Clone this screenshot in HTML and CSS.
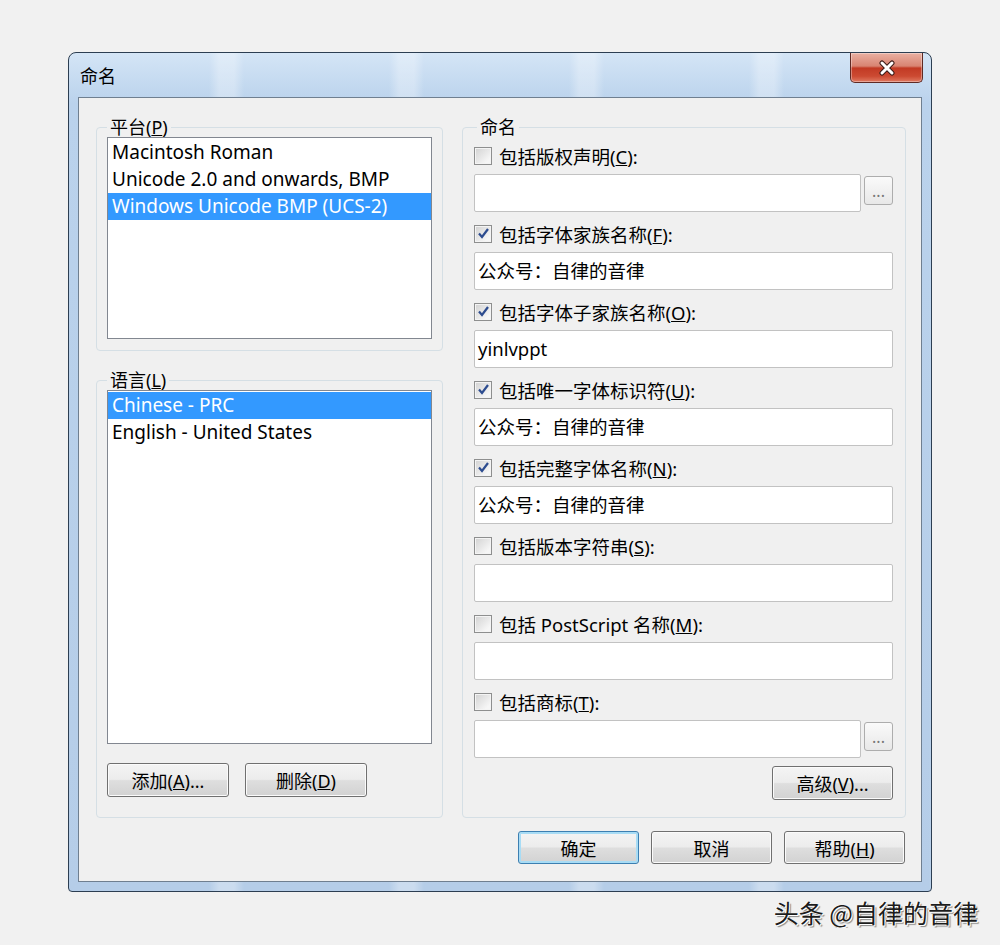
FILE: index.html
```html
<!DOCTYPE html>
<html lang="zh-CN">
  <head>
    <meta charset="UTF-8" />
    <title>命名</title>
    <link rel="stylesheet" href="styles.css">
  </head>
  <body>
    <div class="page">
      <div class="window">
        <div class="titlebar">
          <span class="title">命名</span>
          <div class="close">
            <svg width="18" height="16" viewBox="0 0 18 16">
              <path d="M4 3 L14 13 M14 3 L4 13" stroke="#3a1a16" stroke-width="5" stroke-linecap="round" fill="none" />
              <path d="M4 3 L14 13 M14 3 L4 13" stroke="#ffffff" stroke-width="3" stroke-linecap="round" fill="none" />
            </svg>
          </div>
        </div>

        <div class="client">
          <div class="panes">
            <!-- 左侧：平台 / 语言 -->
            <div class="left">
              <fieldset class="group platform">
                <legend>平台(<u>P</u>)</legend>
                <ul class="listbox">
                  <li>Macintosh Roman</li>
                  <li>Unicode 2.0 and onwards, BMP</li>
                  <li class="selected">Windows Unicode BMP (UCS-2)</li>
                </ul>
              </fieldset>

              <fieldset class="group language">
                <legend>语言(<u>L</u>)</legend>
                <ul class="listbox">
                  <li class="selected">Chinese - PRC</li>
                  <li>English - United States</li>
                </ul>
                <div class="list-buttons">
                  <button class="btn">添加(<u>A</u>)...</button>
                  <button class="btn">删除(<u>D</u>)</button>
                </div>
              </fieldset>
            </div>

            <!-- 右侧：命名 -->
            <fieldset class="group naming">
              <legend>命名</legend>

              <div class="field">
                <label class="check-row"><span class="check"></span><span>包括版权声明(<u>C</u>):</span></label>
                <div class="input-row">
                  <div class="text-input"></div>
                  <button class="dots">...</button>
                </div>
              </div>

              <div class="field">
                <label class="check-row">
                  <span class="check"><svg width="15" height="15" viewBox="0 0 15 15"><path d="M3 7.5 L6 11 L12 3" stroke="#2d4c8f" stroke-width="2.2" fill="none" /></svg></span>
                  <span>包括字体家族名称(<u>F</u>):</span>
                </label>
                <div class="text-input">公众号：自律的音律</div>
              </div>

              <div class="field">
                <label class="check-row">
                  <span class="check"><svg width="15" height="15" viewBox="0 0 15 15"><path d="M3 7.5 L6 11 L12 3" stroke="#2d4c8f" stroke-width="2.2" fill="none" /></svg></span>
                  <span>包括字体子家族名称(<u>O</u>):</span>
                </label>
                <div class="text-input">yinlvppt</div>
              </div>

              <div class="field">
                <label class="check-row">
                  <span class="check"><svg width="15" height="15" viewBox="0 0 15 15"><path d="M3 7.5 L6 11 L12 3" stroke="#2d4c8f" stroke-width="2.2" fill="none" /></svg></span>
                  <span>包括唯一字体标识符(<u>U</u>):</span>
                </label>
                <div class="text-input">公众号：自律的音律</div>
              </div>

              <div class="field">
                <label class="check-row">
                  <span class="check"><svg width="15" height="15" viewBox="0 0 15 15"><path d="M3 7.5 L6 11 L12 3" stroke="#2d4c8f" stroke-width="2.2" fill="none" /></svg></span>
                  <span>包括完整字体名称(<u>N</u>):</span>
                </label>
                <div class="text-input">公众号：自律的音律</div>
              </div>

              <div class="field">
                <label class="check-row"><span class="check"></span><span>包括版本字符串(<u>S</u>):</span></label>
                <div class="text-input"></div>
              </div>

              <div class="field">
                <label class="check-row"><span class="check"></span><span>包括 PostScript 名称(<u>M</u>):</span></label>
                <div class="text-input"></div>
              </div>

              <div class="field">
                <label class="check-row"><span class="check"></span><span>包括商标(<u>T</u>):</span></label>
                <div class="input-row">
                  <div class="text-input"></div>
                  <button class="dots">...</button>
                </div>
              </div>

              <button class="btn advanced">高级(<u>V</u>)...</button>
            </fieldset>
          </div>

          <div class="actions">
            <button class="btn default">确定</button>
            <button class="btn">取消</button>
            <button class="btn">帮助(<u>H</u>)</button>
          </div>
        </div>
      </div>

      <div class="watermark">头条 @自律的音律</div>
    </div>
  </body>
</html>
```

FILE: styles.css
```css
/* 基本样式 */
* {
  margin: 0;
  padding: 0;
  box-sizing: border-box;
}

body {
  background-color: #f1f1f1;
  color: #000;
  font-family: "Noto Sans", "Noto Sans CJK SC", sans-serif;
  font-size: 18px;
}

.page {
  padding: 52px 0 0 68px;
}

/* 窗口外框 */
.window {
  width: 864px;
  height: 840px;
  display: flex;
  flex-direction: column;
  padding: 0 9px 9px;
  border: 1px solid #2c3e52;
  border-radius: 8px 8px 4px 4px;
  background:
    repeating-linear-gradient(90deg, rgba(255, 255, 255, 0) 0 140px, rgba(255, 255, 255, 0.3) 150px 165px, rgba(255, 255, 255, 0) 175px 180px),
    linear-gradient(#d4e5f6, #bad2ec 6%, #b5cde8 100%);
}

.titlebar {
  height: 44px;
  display: flex;
  justify-content: space-between;
  align-items: flex-start;
}

.title {
  padding: 12px 0 0 2px;
  line-height: 22px;
}

.close {
  width: 73px;
  height: 30px;
  margin-right: -1px;
  display: flex;
  align-items: center;
  justify-content: center;
  border: 1px solid #5f2a24;
  border-top: none;
  border-radius: 0 0 5px 5px;
  background: linear-gradient(#eab0a2 0%, #d88472 45%, #c23a24 52%, #cc4a32 80%, #e07a62 100%);
  box-shadow: inset 0 0 0 1px rgba(255, 255, 255, 0.35);
}

/* 客户区 */
.client {
  flex: 1;
  display: flex;
  flex-direction: column;
  padding: 19px 16px 17px 17px;
  border: 1px solid #6f7f90;
  background-color: #f0f0f0;
}

.panes {
  flex: 1;
  display: grid;
  grid-template-columns: 347px 444px;
  gap: 19px;
}

.left {
  display: flex;
  flex-direction: column;
  gap: 19px;
}

/* 分组框 */
.group {
  min-width: 0;
  padding: 0 10px 11px;
  border: 1px solid #d5dfe5;
  border-radius: 4px;
}

.group legend {
  padding: 0 3px;
  line-height: 20px;
  font-size: 18px;
}

.listbox {
  list-style: none;
  height: 202px;
  padding-top: 1px;
  border: 1px solid #828790;
  background-color: #fff;
  font-size: 19px;
}

.listbox li {
  height: 27px;
  line-height: 27px;
  padding-left: 4px;
  white-space: nowrap;
}

.listbox li.selected {
  background-color: #3399ff;
  color: #fff;
}

.language {
  flex: 1;
  display: flex;
  flex-direction: column;
  padding-bottom: 20px;
}

.language .listbox {
  flex: 1;
  height: auto;
}

.list-buttons {
  display: flex;
  gap: 16px;
  margin-top: 19px;
}

/* 按钮 */
.btn {
  width: 122px;
  height: 34px;
  border: 1px solid #707070;
  border-radius: 3px;
  background: linear-gradient(#f4f4f4 0%, #ececec 48%, #dedede 52%, #d2d2d2 100%);
  box-shadow: inset 0 0 0 1px #fbfbfb;
  font-family: inherit;
  font-size: 18px;
  color: #000;
}

.btn.default {
  border-color: #3c7fb1;
  box-shadow: inset 0 0 0 2px #a8dcf5;
}

/* 命名分组 */
.naming {
  display: flex;
  flex-direction: column;
  gap: 3px;
  padding: 0 12px 17px 11px;
  font-size: 18.5px;
}

.naming legend {
  margin-left: 3px;
}

.check-row {
  height: 37px;
  display: flex;
  align-items: center;
  gap: 7px;
  white-space: nowrap;
}

.check {
  width: 18px;
  height: 18px;
  display: flex;
  align-items: center;
  justify-content: center;
  border: 1px solid #8e8f8f;
  background: linear-gradient(135deg, #d2d2d2, #f6f6f6 80%);
  box-shadow: inset 0 0 0 1px #f4f4f4;
}

.text-input {
  height: 38px;
  line-height: 36px;
  padding: 0 3px;
  border: 1px solid #c2c2c2;
  border-radius: 2px;
  background-color: #fff;
  white-space: nowrap;
}

.input-row {
  display: flex;
  gap: 3px;
}

.input-row .text-input {
  flex: 1;
}

.dots {
  width: 29px;
  height: 29px;
  margin-top: 2px;
  border: 1px solid #adadad;
  border-radius: 3px;
  background: linear-gradient(#fafafa, #e8e8e8);
  font-family: inherit;
  font-size: 16px;
  line-height: 20px;
  color: #777;
}

.advanced {
  width: 121px;
  margin-top: auto;
  align-self: flex-end;
}

/* 底部按钮 */
.actions {
  display: flex;
  justify-content: flex-end;
  gap: 12px;
  margin-top: 13px;
}

.actions .btn {
  width: 121px;
  height: 33px;
}

/* 水印 */
.watermark {
  width: 910px;
  margin-top: 4px;
  text-align: right;
  font-family: "Noto Sans CJK SC", sans-serif;
  font-size: 25px;
  line-height: 32px;
  color: #1c1c1c;
  text-shadow: 1px 1px 0 #fff, -1px 0 0 #fff, 2px 2px 1px #888;
}
```
